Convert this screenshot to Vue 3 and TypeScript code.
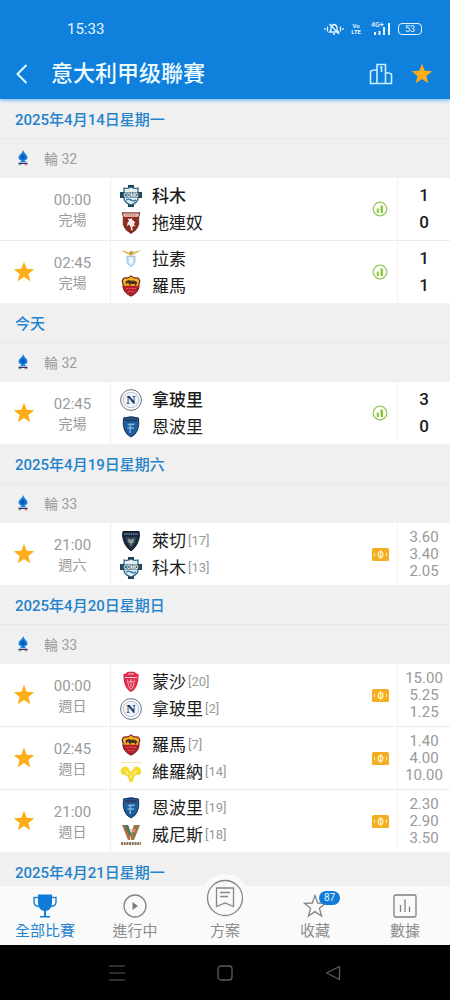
<script setup lang="ts">
import { ref } from 'vue'

interface Team {
  name: string
  crest: string
  rank?: number
  winner?: boolean
}

interface Match {
  time: string
  state: string
  starred: boolean
  teams: [Team, Team]
  score?: string[]
  odds?: string[]
}

interface Day {
  date: string
  round?: string
  matches: Match[]
}

const days = ref<Day[]>([
  {
    date: '2025年4月14日星期一',
    round: '輪 32',
    matches: [
      {
        time: '00:00', state: '完場', starred: false, score: ['1', '0'],
        teams: [{ name: '科木', crest: 'como', winner: true }, { name: '拖連奴', crest: 'torino' }],
      },
      {
        time: '02:45', state: '完場', starred: true, score: ['1', '1'],
        teams: [{ name: '拉素', crest: 'lazio' }, { name: '羅馬', crest: 'roma' }],
      },
    ],
  },
  {
    date: '今天',
    round: '輪 32',
    matches: [
      {
        time: '02:45', state: '完場', starred: true, score: ['3', '0'],
        teams: [{ name: '拿玻里', crest: 'napoli', winner: true }, { name: '恩波里', crest: 'empoli' }],
      },
    ],
  },
  {
    date: '2025年4月19日星期六',
    round: '輪 33',
    matches: [
      {
        time: '21:00', state: '週六', starred: true, odds: ['3.60', '3.40', '2.05'],
        teams: [{ name: '萊切', crest: 'lecce', rank: 17 }, { name: '科木', crest: 'como', rank: 13 }],
      },
    ],
  },
  {
    date: '2025年4月20日星期日',
    round: '輪 33',
    matches: [
      {
        time: '00:00', state: '週日', starred: true, odds: ['15.00', '5.25', '1.25'],
        teams: [{ name: '蒙沙', crest: 'monza', rank: 20 }, { name: '拿玻里', crest: 'napoli', rank: 2 }],
      },
      {
        time: '02:45', state: '週日', starred: true, odds: ['1.40', '4.00', '10.00'],
        teams: [{ name: '羅馬', crest: 'roma', rank: 7 }, { name: '維羅納', crest: 'verona', rank: 14 }],
      },
      {
        time: '21:00', state: '週日', starred: true, odds: ['2.30', '2.90', '3.50'],
        teams: [{ name: '恩波里', crest: 'empoli', rank: 19 }, { name: '威尼斯', crest: 'venezia', rank: 18 }],
      },
    ],
  },
  { date: '2025年4月21日星期一', matches: [] },
])

const tabs = [
  { id: 'all', label: '全部比賽' },
  { id: 'live', label: '進行中' },
  { id: 'plan', label: '方案' },
  { id: 'fav', label: '收藏', badge: 87 },
  { id: 'data', label: '數據' },
]
const activeTab = ref('all')
</script>

<template>
  <div class="screen">
    <svg class="sprite" aria-hidden="true">
      <symbol id="star" viewBox="0 0 22 22">
        <path d="M11 .8l2.700 7 7.500.4-5.800 4.700 1.900 7.300L11 16.100l-6.300 4.100 1.900-7.300L.8 8.200l7.500-.4z" fill="#fcad18" />
      </symbol>
      <symbol id="league" viewBox="0 0 12 16">
        <path d="M6 0Q7 2.500 9.500 5c2 2.500.5 5-1.500 5.200l-1-.4L9 12H3l2-2.200-1 .4C2 10 .5 7.500 2.500 5 5 2.500 6 1.500 6 0z" fill="#1180df" />
        <path d="M6 4L3.500 7.500 6 10l2.500-2.500z" fill="#0b55b5" />
        <path d="M1.500 12.700h9v1.300h-9z" fill="#33376c" />
        <path d="M1.500 14.200h3v1h-3z" fill="#5d9b7d" />
        <path d="M7.500 14.200h3v1h-3z" fill="#c06a80" />
      </symbol>
      <symbol id="como" viewBox="0 0 22 22">
        <path d="M8 0h6v4H8zM8 18h6v4H8zM0 7h4v6H0zM18 7h4v6h-4z" fill="#1d4159" />
        <path d="M4 3q4 1 7-1 3 2 7 1v11q-1 4-7 6-6-2-7-6z" fill="#e3eef3" stroke="#2b5d7b" stroke-width="1.200" />
        <path d="M1 7.500h20v5H1z" fill="#244e68" />
        <path d="M6 15q2.500-1.500 5 0t5 0" fill="none" stroke="#3e86ac" stroke-width="1.500" />
      </symbol>
      <symbol id="torino" viewBox="0 0 22 22">
        <path d="M2 .8h18l-1.200 3.700v8Q17.500 18 11 21.500 4.500 18 3.200 12.500v-8z" fill="#8a2b22" stroke="#713028" stroke-width=".8" />
        <path d="M3 1.500h16l-1 3.200H4z" fill="#f1d8c9" />
        <path d="M5 3h12" stroke="#9d4936" stroke-width="1.200" stroke-dasharray="1.500 .8" />
        <path d="M7.500 6.500l3 .5 1-1.200 1 2.200 3 2.500-1.500 1 1 3-1.500-.5-1.500 1.500 1 3-2-.5-.5-3.500-1.500-2-2 2 .5-3.500 1.500-2z" fill="#f7ece5" />
      </symbol>
      <symbol id="lazio" viewBox="0 0 22 22">
        <path d="M7 8q4 1.500 8 0v5.500q-.8 3.500-4 5-3.200-1.500-4-5z" fill="#c9e3f1" stroke="#93c3de" />
        <path d="M9.500 9.500h3v6l-1.500 1-1.500-1z" fill="#f6fafc" />
        <path d="M.5 2.500q6 0 8 2L11 3l2 1.500q2-2 8.500-2Q18 4 16 5.500l-3 1.300-2 1.700-2-1.700-3-1.300Q4 4 .5 2.500z" fill="#dcc069" />
        <path d="M9 6l2-3 2.500.5-1.500 1.500-.5 2z" fill="#b79138" />
      </symbol>
      <symbol id="roma" viewBox="0 0 22 22">
        <path d="M11 .8l3 2 4.500.2L20 6q-1.500 3-1 6-1 6-8 9.200Q4 18 3 12q.5-3-1-6l1.500-3L8 2.800z" fill="#b91f2b" stroke="#651c20" />
        <path d="M11 1.500l3 2 4 .3L19.200 6q-1.200 2.500-1 4.700H3.800Q4 8.500 2.800 6L4 3.800l4-.3z" fill="#f2b31f" />
        <path d="M5.500 8.500l.5-2.500 3-1 2 .8 3-.3 3 1.500v2.500l-1-.5v1.500h-1l-.5-1.500h-3.500l-.5 1.500h-1L9 8.500 7 8v1.500z" fill="#4b3424" />
        <path d="M6 13.500h10M8 16.500h6" stroke="#e2584f" stroke-width="1.200" stroke-dasharray="2 .8" />
      </symbol>
      <symbol id="napoli" viewBox="0 0 22 22">
        <circle cx="11" cy="11" r="10.400" fill="#fff" stroke="#65728a" />
        <circle cx="11" cy="11" r="7.800" fill="#edf3fa" stroke="#a9b3c3" stroke-width=".8" />
      </symbol>
      <symbol id="empoli" viewBox="0 0 22 22">
        <path d="M3.500 2Q11-.5 18.500 2q1 7-1 12-2 5-6.500 7-4.500-2-6.500-7-2-5-1-12z" fill="#1d5f9d" stroke="#172f52" />
        <path d="M5 3.200q6-1.500 12 0v2.300H5z" fill="#2a3f68" />
        <path d="M15 7.500H9l-2 1.800h2.500v2H7.500v1.500h2V17h1.500v-4.200h3v-1.500h-3v-2h3z" fill="#7fb4da" />
      </symbol>
      <symbol id="lecce" viewBox="0 0 22 22">
        <path d="M3 1.500h16l.5 3Q19 15 11 21 3 15 2.500 4.500z" fill="#182a40" stroke="#0c192a" />
        <path d="M4 4h14" stroke="#75869a" stroke-width="1.500" stroke-dasharray="1.500 .7" />
        <path d="M5.500 7h11l-1 4q-1.500 4-4.500 7-3-3-4.500-7z" fill="#33434f" />
        <path d="M7.500 8.500l3.500 1 3.500-1-1 2.500 1 1-2.500 1-1 3.500-1-3.500-2.500-1 1-1z" fill="#8f9c98" />
      </symbol>
      <symbol id="monza" viewBox="0 0 22 22">
        <path d="M3.500 3Q6 3 7.500.8h7Q16 3 18.500 3 19 12 15.500 17q-2 3-4.500 4-2.500-1-4.500-4Q3 12 3.500 3z" fill="#de2b4c" />
        <path d="M5 6.500h12M8 3h6" stroke="#f9d3da" stroke-width="1.200" />
        <path d="M7.500 8.500l1 6q1 3 2.500 4 1.500-1 2.500-4l1-6" fill="none" stroke="#f6b4c0" />
        <path d="M11 8v8M9 10.500h4" stroke="#f6b4c0" />
      </symbol>
      <symbol id="verona" viewBox="0 0 22 22">
        <path d="M1 1.500h20" stroke="#ead679" stroke-dasharray="1 .6" />
        <path d="M11 11L7.500 6Q3 4 .8 9q-.8 5.500 5 5 2.700 1.500 3.500 7h3.400q.8-5.500 3.500-7 5.800.5 5-5-2.200-5-6.700-3z" fill="#f3da2f" />
        <path d="M5.500 9.500l3 4M16.500 9.500l-3 4M11 13v4" stroke="#fdf6b4" stroke-width="1.200" />
      </symbol>
      <symbol id="venezia" viewBox="0 0 22 22">
        <path d="M2 1h6l3 9-1 6H8z" fill="#b5703f" />
        <path d="M4 1h4l3 8-1 4z" fill="#477a5e" />
        <path d="M20 1h-6l-3 9v6h3z" fill="#97784a" />
        <path d="M11 5h5l-1.500 3H12z" fill="#d29a68" />
        <path d="M1 19.500h20" stroke="#8b7158" stroke-width="3" stroke-dasharray="2 .7" />
      </symbol>
    </svg>

    <header class="header">
      <div class="status">
        <span class="clock">15:33</span>
        <span class="indicators">
          <svg width="20" height="14" viewBox="0 0 20 14" fill="none" stroke="#e4f5ff" stroke-width="1.300">
            <path d="M5.500 10h9l-1.500-2V6q0-3-3-3.500Q7 3 7 6v2zM9 12h2M5.500 2l9.500 10M3.500 4.500v5M16.500 4.500v5M1 6v2M19 6v2" />
          </svg>
          <span class="volte"><span>Vo</span><span>LTE</span></span>
          <span class="signal">
            <span>4G+</span>
            <svg width="20" height="14" viewBox="0 0 20 14" fill="#e4f5ff">
              <path d="M3 10h2v3H3zM7.500 9h2v4h-2zM12 5h2v8h-2zM17 1h2v12h-2z" />
            </svg>
          </span>
          <span class="battery">53</span>
        </span>
      </div>
      <div class="toolbar">
        <button class="icon-button back" type="button" aria-label="返回">
          <svg width="14" height="22" viewBox="0 0 14 22" fill="none" stroke="#e4faff" stroke-width="2">
            <path d="M11.500 2L2.500 11l9 9" />
          </svg>
        </button>
        <h1 class="title">意大利甲级聯賽</h1>
        <button class="icon-button" type="button" aria-label="排名">
          <svg width="24" height="22" viewBox="0 0 24 22" fill="none" stroke="#c9efff" stroke-width="1.600">
            <path d="M8 7H5L1.500 8v12.500h21V11L20 10h-4M8 20.500v-19h8.500v19M11 4.500l1.500-.5v5" />
          </svg>
        </button>
        <button class="icon-button" type="button" aria-label="收藏聯賽">
          <svg width="22" height="22"><use href="#star" /></svg>
        </button>
      </div>
    </header>

    <main class="list">
      <section v-for="day in days" :key="day.date">
        <h2 class="date">{{ day.date }}</h2>
        <div v-if="day.round" class="round">
          <svg width="12" height="16"><use href="#league" /></svg>
          <span>{{ day.round }}</span>
        </div>
        <ul class="matches">
          <li v-for="(match, i) in day.matches" :key="i" class="match">
            <button class="icon-button star" type="button" aria-label="收藏比賽" @click="match.starred = !match.starred">
              <svg v-if="match.starred" width="22" height="22"><use href="#star" /></svg>
            </button>
            <div class="when">
              <span>{{ match.time }}</span>
              <span class="state">{{ match.state }}</span>
            </div>
            <div class="teams">
              <div v-for="team in match.teams" :key="team.name" class="team">
                <svg width="22" height="22">
                  <use :href="'#' + team.crest" />
                  <text v-if="team.crest === 'como'" x="11" y="12" class="crest-text">COMO</text>
                  <text v-if="team.crest === 'napoli'" x="11" y="15" class="crest-initial">N</text>
                </svg>
                <span class="name" :class="{ winner: team.winner }">{{ team.name }}</span>
                <span v-if="team.rank" class="rank">[{{ team.rank }}]</span>
              </div>
            </div>
            <div class="feature">
              <svg v-if="match.score" width="16" height="16" viewBox="0 0 16 16">
                <circle cx="8" cy="8" r="6.800" fill="none" stroke="#98c862" stroke-width="1.300" />
                <path d="M4.800 7.500h2V12h-2zM8.500 4.500H11V12H8.500z" fill="#86c832" />
              </svg>
              <svg v-else width="17" height="13" viewBox="0 0 17 13">
                <rect width="17" height="13" rx="1.500" fill="#f3ae24" />
                <ellipse cx="8.500" cy="6.500" rx="2.200" ry="3" fill="none" stroke="#fff0b0" stroke-width="1.500" />
                <path d="M8.500 2v9M2.500 5v3M14.500 5v3" stroke="#fff0b0" />
              </svg>
            </div>
            <div v-if="match.score" class="score">
              <span v-for="(goals, n) in match.score" :key="n">{{ goals }}</span>
            </div>
            <div v-else class="odds">
              <span v-for="(odd, n) in match.odds" :key="n">{{ odd }}</span>
            </div>
          </li>
        </ul>
      </section>
    </main>

    <nav class="tabs">
      <button
        v-for="tab in tabs"
        :key="tab.id"
        type="button"
        class="tab"
        :class="{ active: tab.id === activeTab, raised: tab.id === 'plan' }"
        @click="activeTab = tab.id"
      >
        <span class="tab-icon">
          <svg v-if="tab.id === 'all'" width="24" height="24" viewBox="0 0 24 24">
            <path d="M5 .5h14V10q-1 6-6 7v5h4v1.500H7V22h4v-5q-5-1-6-7z" fill="#0f7dd8" />
            <path d="M5 3.500H1V8q0 4 5 4.500M19 3.500h4V8q0 4-5 4.500" fill="none" stroke="#2b86d0" stroke-width="1.500" />
          </svg>
          <svg v-else-if="tab.id === 'live'" width="24" height="24" viewBox="0 0 24 24">
            <circle cx="12" cy="12" r="11" fill="none" stroke="#858585" stroke-width="1.300" />
            <path d="M9.500 8l5.500 4-5.500 4z" fill="#7d7d7d" />
          </svg>
          <svg v-else-if="tab.id === 'plan'" width="38" height="38" viewBox="0 0 38 38" fill="none" stroke="#868686" stroke-width="1.300">
            <circle cx="19" cy="19" r="17.500" />
            <path d="M10.500 9h17v18.500L19 24l-8.500 3.500zM14 13.500h10M14 17.500h8" />
          </svg>
          <svg v-else-if="tab.id === 'fav'" width="24" height="24" viewBox="0 0 24 24">
            <path d="M12 1.500l2.700 7.500 8 .3-6.300 5 2.200 7.700L12 17.600 5.400 22l2.200-7.700-6.300-5 8-.3z" fill="none" stroke="#858585" stroke-width="1.300" />
          </svg>
          <svg v-else width="24" height="24" viewBox="0 0 24 24" fill="none" stroke="#808080" stroke-width="1.300">
            <rect x="1" y="1" width="22" height="22" rx="1.500" />
            <path d="M7.500 11v7M12 5.500V18M16.500 12.500V18" />
          </svg>
          <span v-if="tab.badge" class="badge">{{ tab.badge }}</span>
        </span>
        <span>{{ tab.label }}</span>
      </button>
    </nav>

    <div class="system">
      <button class="icon-button" type="button" aria-label="選單">
        <svg width="16" height="16" viewBox="0 0 16 16" stroke="#5c5c5c" stroke-width="1.200"><path d="M0 1h16M0 8h16M0 15h16" /></svg>
      </button>
      <button class="icon-button" type="button" aria-label="主畫面">
        <svg width="16" height="16" viewBox="0 0 16 16" fill="none" stroke="#5c5c5c" stroke-width="1.300"><rect x="1" y="1" width="14" height="14" rx="3" /></svg>
      </button>
      <button class="icon-button" type="button" aria-label="上一頁">
        <svg width="16" height="16" viewBox="0 0 16 16" fill="none" stroke="#5c5c5c" stroke-width="1.300" stroke-linejoin="round"><path d="M14.500 1.500v13L1.500 8z" /></svg>
      </button>
    </div>
  </div>
</template>

<style>
body {
  margin: 0;
  background: #fff;
}
</style>

<style scoped>
.screen {
  display: flex;
  flex-direction: column;
  height: 100vh;
  overflow: hidden;
  font-family: Roboto, "Noto Sans CJK TC", sans-serif;
  color: #1c1c1c;
}

button {
  margin: 0;
  padding: 0;
  border: 0;
  background: none;
  font: inherit;
  color: inherit;
}

svg {
  display: block;
  flex: none;
}

.sprite {
  position: absolute;
  width: 0;
  height: 0;
}

.crest-text {
  font-size: 5px;
  font-weight: 700;
  text-anchor: middle;
  fill: #fff;
}

.crest-initial {
  font-family: "Liberation Serif", serif;
  font-size: 13px;
  font-weight: 700;
  text-anchor: middle;
  fill: #172f55;
}

.icon-button {
  display: flex;
  align-items: center;
  justify-content: center;
}

.header {
  position: relative;
  z-index: 1;
  flex: none;
  background: #0f80dc;
  box-shadow: 0 1px 4px #5fb2f2;
}

.status {
  display: flex;
  align-items: center;
  justify-content: space-between;
  box-sizing: border-box;
  height: 48px;
  padding: 10px 28px 0 67px;
  color: #e4f5ff;
}

.clock {
  font-size: 15px;
}

.indicators {
  display: flex;
  align-items: center;
  gap: 7px;
}

.volte {
  display: flex;
  flex-direction: column;
  align-items: center;
  margin-right: 3px;
  font-size: 6px;
  font-weight: 700;
  line-height: 6px;
}

.signal {
  display: grid;
}

.signal > * {
  grid-area: 1 / 1;
}

.signal > span {
  font-size: 7px;
  font-weight: 500;
  line-height: 7px;
}

.battery {
  width: 22px;
  border: 1px solid #e4f5ff;
  border-radius: 4px;
  font-size: 9px;
  line-height: 10px;
  text-align: center;
}

.toolbar {
  display: flex;
  align-items: center;
  gap: 18px;
  height: 51px;
  padding: 0 17px 0 15px;
}

.back {
  margin-right: 4px;
}

.title {
  flex: 1;
  margin: 0;
  font-size: 22px;
  font-weight: 500;
  line-height: 32px;
  color: #eefbff;
}

.list {
  flex: 1;
  min-height: 0;
  overflow: hidden;
  background: #f0f0f0;
}

.date {
  margin: 0;
  padding: 3px 15px 0;
  border-bottom: 1px solid #e9e9e9;
  font-size: 15px;
  font-weight: 500;
  line-height: 36px;
  color: #2483cc;
}

.round {
  display: flex;
  align-items: center;
  gap: 15px;
  box-sizing: border-box;
  height: 39px;
  padding: 0 17px 2px;
  font-size: 14px;
  color: #9e9e9e;
}

.matches {
  margin: 0;
  padding: 0;
  list-style: none;
  background: #fff;
}

.match {
  display: grid;
  grid-template-columns: 48px 62px 1fr 34px 53px;
  align-items: stretch;
  min-height: 62px;
}

.match + .match {
  border-top: 1px solid #ececec;
}

.when {
  display: flex;
  flex-direction: column;
  align-items: center;
  justify-content: center;
  padding: 2px 13px 0 0;
  font-size: 15px;
  line-height: 20px;
  color: #9a9a9a;
}

.state {
  font-size: 14px;
}

.teams {
  display: flex;
  flex-direction: column;
  justify-content: center;
  padding-left: 9px;
  border-left: 1px solid #efefef;
}

.team {
  display: flex;
  align-items: center;
  height: 27px;
}

.name {
  margin: 0 2px 0 10px;
  padding-top: 2px;
  font-size: 17px;
  line-height: 25px;
}

.winner {
  font-weight: 500;
}

.rank {
  font-size: 13px;
  color: #999;
}

.feature {
  display: flex;
  align-items: center;
  justify-content: center;
}

.score,
.odds {
  display: flex;
  flex-direction: column;
  align-items: center;
  justify-content: center;
  border-left: 1px solid #f4f4f4;
}

.score {
  font-size: 17px;
  font-weight: 500;
  line-height: 27px;
}

.odds {
  font-size: 15px;
  line-height: 17px;
  color: #999;
}

.tabs {
  position: relative;
  display: grid;
  grid-template-columns: repeat(5, 1fr);
  grid-template-rows: 59px;
  flex: none;
  background: #fafafa;
}

.tab {
  display: flex;
  flex-direction: column;
  align-items: center;
  justify-content: flex-end;
  gap: 2px;
  min-height: 0;
  padding-bottom: 3px;
  font-size: 15px;
  line-height: 22px;
  color: #8c8c8c;
}

.active {
  color: #2584cf;
}

.tab-icon {
  position: relative;
}

.raised .tab-icon {
  padding: 5px;
  margin-bottom: -4px;
  border-radius: 50%;
  background: #fafafa;
}

.badge {
  position: absolute;
  top: -3px;
  left: 16px;
  width: 21px;
  border-radius: 7px;
  background: #0f7dd8;
  font-size: 10px;
  line-height: 14px;
  text-align: center;
  color: #e8f7ff;
}

.system {
  display: flex;
  align-items: center;
  justify-content: center;
  gap: 92px;
  flex: none;
  height: 55px;
  background: #000;
}
</style>
